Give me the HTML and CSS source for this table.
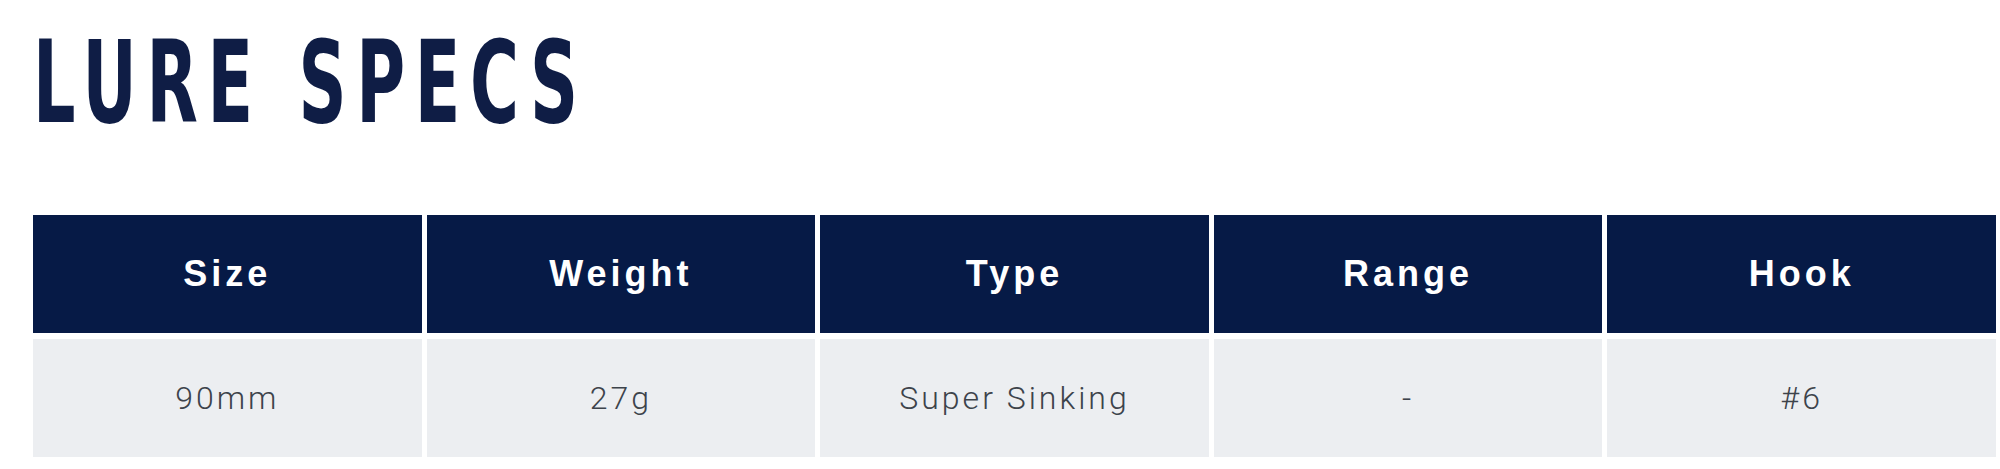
FILE: index.html
```html
<!DOCTYPE html>
<html lang="en">
<head>
<meta charset="utf-8">
<title>Lure Specs</title>
<link rel="stylesheet" href="styles.css">
</head>
<body>
<section class="specs">
  <h1 class="specs-title">LURE SPECS</h1>
  <div class="spec-table">
    <div class="cell head">Size</div>
    <div class="cell head">Weight</div>
    <div class="cell head">Type</div>
    <div class="cell head">Range</div>
    <div class="cell head">Hook</div>
    <div class="cell data">90mm</div>
    <div class="cell data">27g</div>
    <div class="cell data">Super Sinking</div>
    <div class="cell data">-</div>
    <div class="cell data">#6</div>
  </div>
</section>
</body>
</html>
```

FILE: styles.css
```css
html, body {
  margin: 0;
  padding: 0;
  background: #ffffff;
}

.specs {
  padding: 26px 4px 0 33px;
}

.specs-title {
  margin: 0 0 75px 0;
  font-family: "DejaVu Sans", sans-serif;
  font-stretch: condensed;
  font-weight: 700;
  font-size: 114px;
  line-height: 1;
  letter-spacing: 15px;
  word-spacing: 4px;
  color: #0f1d45;
  transform: scaleX(0.65);
  transform-origin: left center;
  white-space: nowrap;
}

.spec-table {
  display: grid;
  grid-template-columns: repeat(5, 1fr);
  column-gap: 5px;
  row-gap: 6px;
}

.cell {
  display: flex;
  align-items: center;
  justify-content: center;
  height: 118px;
}

.head {
  background: #061a46;
  color: #ffffff;
  font-family: "Liberation Sans", Arial, sans-serif;
  font-weight: 700;
  font-size: 36px;
  letter-spacing: 4px;
}

.data {
  background: #eceef1;
  color: #3d434b;
  font-family: Roboto, "Liberation Sans", sans-serif;
  font-weight: 300;
  font-size: 32px;
  letter-spacing: 3px;
}
```
